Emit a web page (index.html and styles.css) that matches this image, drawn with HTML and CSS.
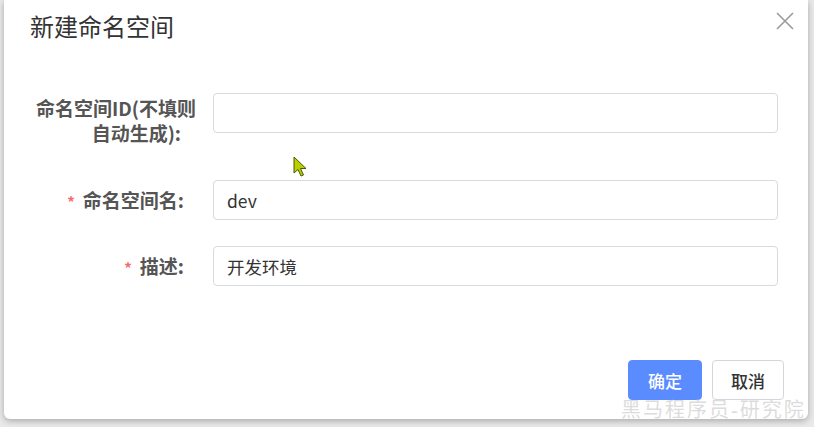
FILE: index.html
```html
<!DOCTYPE html>
<html lang="zh">
<head>
<meta charset="utf-8">
<title>新建命名空间</title>
<link rel="stylesheet" href="styles.css">
</head>
<body>
<div class="dialog">
  <div class="dialog-header">
    <span class="dialog-title">新建命名空间</span>
    <button class="dialog-close" aria-label="close">
      <svg width="18" height="18" viewBox="0 0 18 18"><path d="M1 1L17 17M17 1L1 17" stroke="#9a9a9a" stroke-width="1.6" fill="none"/></svg>
    </button>
  </div>
  <div class="dialog-body">
    <div class="form-item form-item-first">
      <label class="form-label">命名空间ID(不填则<br>自动生成):</label>
      <div class="form-control"><input class="input" type="text" value=""></div>
    </div>
    <div class="form-item form-item-second">
      <label class="form-label"><span class="req">*</span>命名空间名:</label>
      <div class="form-control"><input class="input" type="text" value="dev"></div>
    </div>
    <div class="form-item">
      <label class="form-label"><span class="req">*</span>描述:</label>
      <div class="form-control"><input class="input" type="text" value="开发环境"></div>
    </div>
  </div>
  <div class="dialog-footer">
    <button class="btn btn-primary">确定</button>
    <button class="btn btn-default">取消</button>
  </div>
</div>
<div class="watermark">黑马程序员-研究院</div>
<svg class="cursor" width="16" height="22" viewBox="0 0 16 22"><path d="M1 1L1 17L5 13.5L8 20L10.5 19L7.5 12.5L13 12.5Z" fill="#b8d000" stroke="#4a5a00" stroke-width="1"/></svg>
</body>
</html>
```

FILE: styles.css
```css
html, body {
  margin: 0;
  padding: 0;
}
body {
  width: 814px;
  height: 427px;
  background: #e9e9e9;
  position: relative;
  overflow: hidden;
  font-family: "Noto Sans CJK SC", "Noto Sans", sans-serif;
}
.dialog {
  margin-left: 4px;
  width: 804px;
  height: 419px;
  background: #fff;
  border-radius: 0 0 6px 6px;
  box-shadow: 0 2px 6px rgba(0,0,0,0.28);
  display: flex;
  flex-direction: column;
  position: relative;
  box-sizing: border-box;
}
.dialog-header {
  padding: 9px 26px 0;
  height: 42px;
  box-sizing: border-box;
}
.dialog-title {
  font-size: 24px;
  line-height: 34px;
  color: #333;
}
.dialog-close {
  position: absolute;
  top: 12px;
  right: 14px;
  width: 18px;
  height: 18px;
  border: 0;
  padding: 0;
  background: none;
}
.dialog-close svg { display: block; }
.dialog-body {
  padding: 51px 30px 0 32px;
}
.form-item {
  display: flex;
  align-items: flex-start;
  margin-bottom: 26px;
}
.form-item-first {
  margin-bottom: 35px;
}
.form-item-second {
  margin-bottom: 24px;
}
.form-label {
  width: 177px;
  flex: none;
  text-align: right;
  font-size: 19px;
  font-weight: 700;
  color: #555;
  line-height: 40px;
  padding-right: 29px;
  box-sizing: border-box;
  white-space: nowrap;
}
.form-item-first .form-label {
  line-height: 25px;
  padding-top: 2px;
  padding-right: 32px;
}
.req {
  color: #f56c6c;
  margin-right: 8px;
  font-size: 15px;
}
.form-control {
  flex: 1;
}
.input {
  display: block;
  width: 100%;
  height: 40px;
  box-sizing: border-box;
  border: 1px solid #d8dae2;
  border-radius: 4px;
  padding: 0 13px;
  font-family: "Noto Sans CJK SC", "Noto Sans", sans-serif;
  font-size: 17.5px;
  color: #333;
  background: #fff;
  outline: none;
}
.dialog-footer {
  margin-top: auto;
  padding: 0 24px 19px;
  display: flex;
  justify-content: flex-end;
  gap: 10px;
}
.btn {
  height: 40px;
  border-radius: 4px;
  font-family: "Noto Sans CJK SC", "Noto Sans", sans-serif;
  font-size: 17px;
  font-weight: 500;
  padding: 0;
  box-sizing: border-box;
}
.btn-primary {
  width: 74px;
  background: #5b8cff;
  border: 1px solid #5b8cff;
  color: #fff;
}
.btn-default {
  width: 72px;
  background: #fff;
  border: 1px solid #d4d6dc;
  color: #333;
}
.watermark {
  position: absolute;
  left: 621px;
  top: 397px;
  font-family: "Liberation Serif", "Noto Sans CJK SC", serif;
  font-size: 20px;
  letter-spacing: 2px;
  color: rgba(205,205,205,0.7);
  line-height: 26px;
  white-space: nowrap;
}
.cursor {
  position: absolute;
  left: 293px;
  top: 156px;
}
```
